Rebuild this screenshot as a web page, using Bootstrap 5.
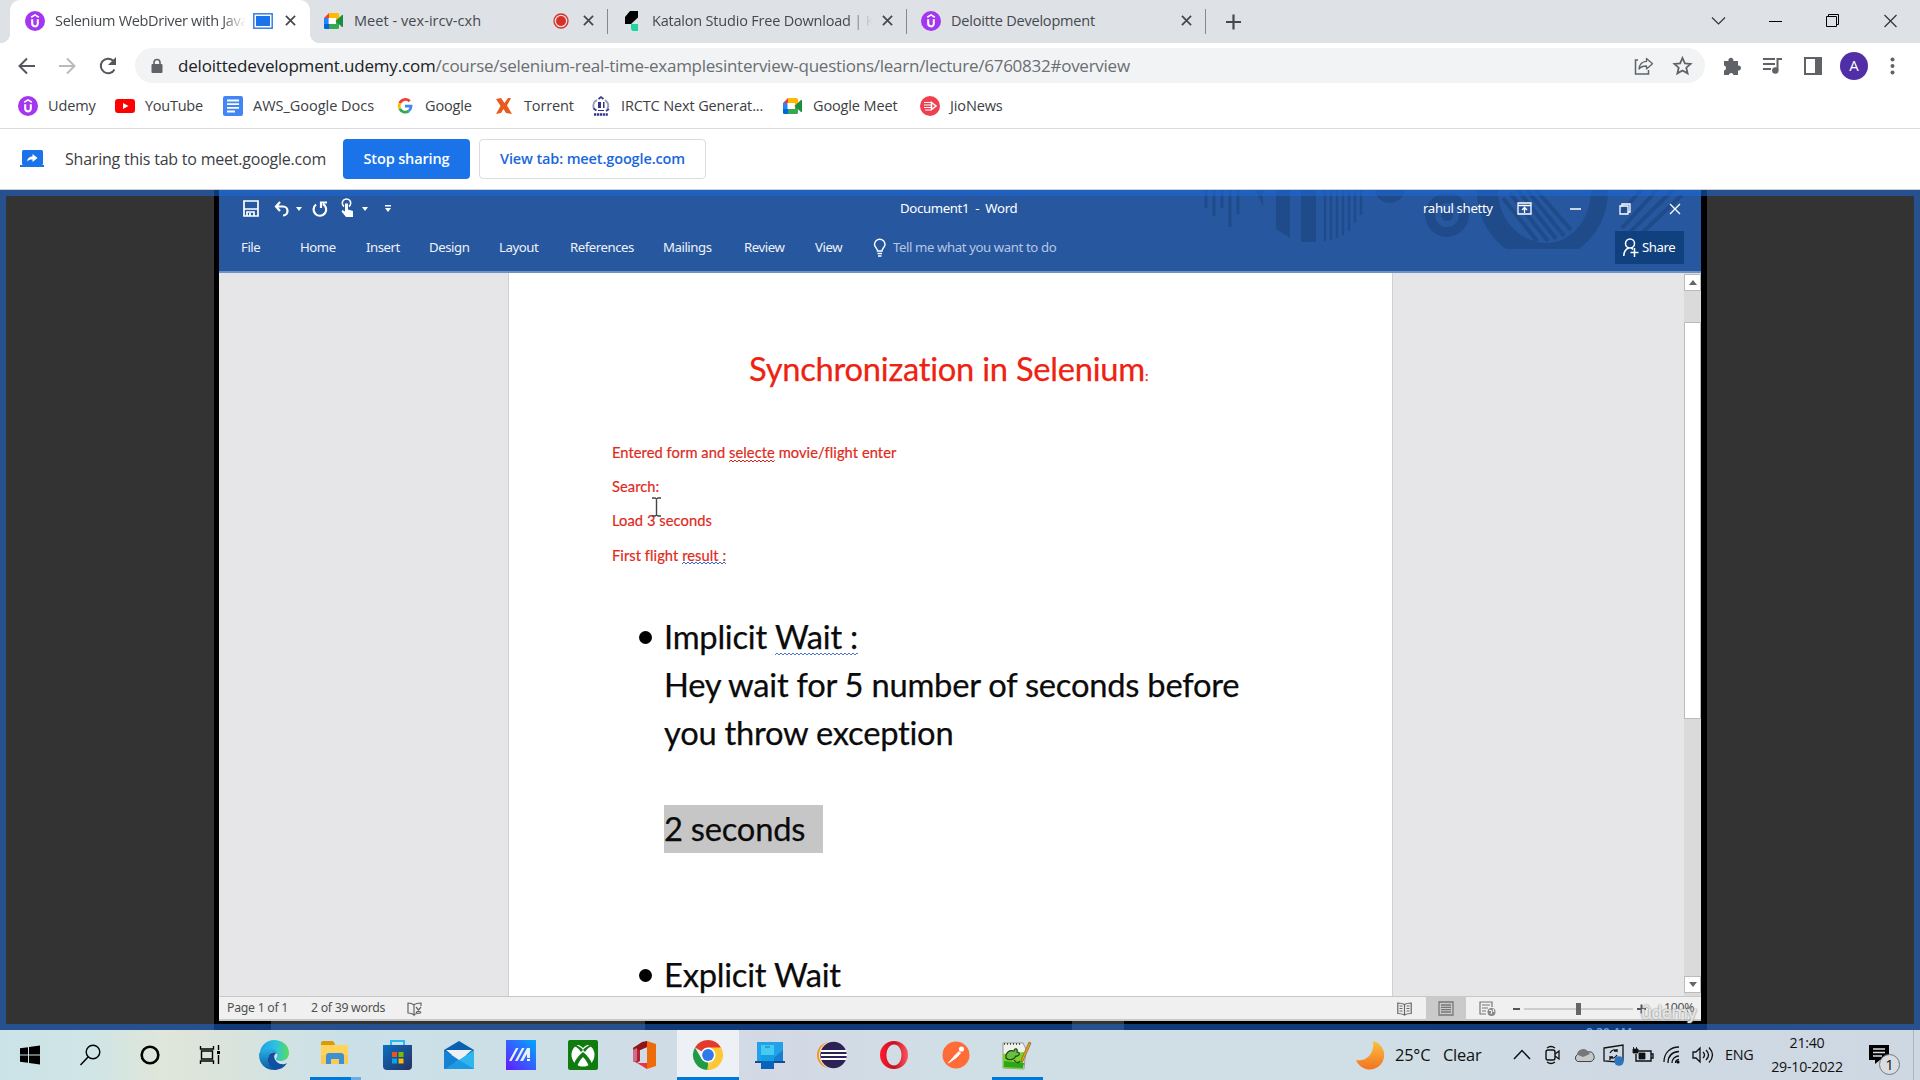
<!DOCTYPE html>
<html lang="en">
<head>
<meta charset="utf-8">
<title>Selenium WebDriver with Java</title>
<link rel="stylesheet" href="https://cdn.jsdelivr.net/npm/bootstrap@5.3.0/dist/css/bootstrap.min.css">
<script src="https://cdn.jsdelivr.net/npm/bootstrap@5.3.0/dist/js/bootstrap.bundle.min.js"></script>
<style>
body{width:1920px;height:1080px;overflow:hidden;font-family:"Open Sans","Noto Sans",sans-serif;color:#3c4043;background:#fff}
svg{display:block;flex:none;overflow:visible}
.cols{display:grid;align-items:center;white-space:nowrap}
.cols>*{min-width:0}
/* tab strip */
.tabstrip{height:43px;background:#dee1e6;font-size:14.5px;letter-spacing:-.2px;grid-template-columns:10px 300px 298px 299px 299px 505px 57px 57px 58px 44px}
.tab{height:43px;display:grid;align-items:center;position:relative;padding-bottom:2px;color:#45494d}
.tab-on{background:#fff;border-radius:10px 10px 0 0;letter-spacing:-.32px;grid-template-columns:15px 30px 198px 32px 20px}
.tab-on::before,.tab-on::after{content:"";position:absolute;bottom:0;width:10px;height:10px}
.tab-on::before{left:-10px;background:radial-gradient(circle at 0 0,transparent 10px,#fff 10.5px)}
.tab-on::after{right:-10px;background:radial-gradient(circle at 100% 0,transparent 10px,#fff 10.5px)}
.tab-off::after{content:"";position:absolute;right:0;top:9px;height:25px;width:1px;background:#85888c}
.tab-meet{letter-spacing:.05px;grid-template-columns:14px 30px 199px 30px 20px}
.tab-kat{grid-template-columns:15px 29px 230px 20px}
.tab-del{grid-template-columns:14px 30px 230px 20px}
.fade-end{overflow:hidden;-webkit-mask-image:linear-gradient(90deg,#000 calc(100% - 24px),transparent)}
/* toolbar */
.toolbar{height:45px;grid-template-columns:17px 40px 40px 38px 1570px 17px 40px 41px 37px 41px 30px}
.omnibox{height:35px;border-radius:18px;background:#f1f3f4;color:#6a6e72;font-size:17px;letter-spacing:-.26px;grid-template-columns:15px 28px 1456px 39px 30px}
.omnibox b{font-weight:400;color:#202124;letter-spacing:-.18px}
.avatar{width:28px;height:28px;background:#512da8;color:#fff;font-size:15px}
.bookmarks{height:41px;padding:0 0 5px 18px;font-size:14.5px;letter-spacing:-.13px;border-bottom:1px solid #dadce0;grid-template-columns:97px 108px 172px 99px 97px 192px 137px 120px}
.bm{display:flex;align-items:center;gap:10px}
.bm-yt{letter-spacing:-.25px}
.sharebar{height:61px;border-bottom:1px solid #cfcfcf;font-size:16px;grid-template-columns:20px 45px 278px 136px 227px}
.share-txt{letter-spacing:-.22px}
.sharebar .btn{height:40px;padding:0;font-size:14.5px;letter-spacing:-.13px;border-radius:4px;font-weight:600;line-height:36px}
.sharebar .btn-stop{width:127px;background:#1a73e8;color:#fff}
.sharebar .btn-view{width:227px;border:1px solid #dadce0;color:#1a67dc}
/* shared tab */
.stage{height:840px;background:#333;position:relative;overflow:hidden}
.share-frame{position:absolute;inset:0;border:6px solid rgba(27,105,216,.55)}
.video{width:1493px;margin-left:214px;height:840px;background:#000;padding:0 6px 0 5px}
.word{height:831px;background:#e6e6e8;font-family:"Noto Sans","Open Sans",sans-serif;position:relative}
.word-head{height:83px;background:#27589f;border-bottom:2px solid #6f92c4;position:relative;color:#fff}
.word-art{position:absolute;left:961px;top:0}
.word-title{height:36px;padding-top:1px;font-size:13.2px;letter-spacing:-.35px;position:relative;grid-template-columns:24px 31px 21px 17px 28px 21px 23px 516px 523px 94px 52px 50px 50px 25px}
.word-menu{height:43px;font-size:13.2px;letter-spacing:-.45px;position:relative;color:#eef2f8;grid-template-columns:22px 59px 66px 63px 70px 71px 93px 81px 71px 58px 20px 722px 69px}
.tell{color:#b5c7e3;letter-spacing:-.4px}
.share-box{height:33px;background:#10407d;display:flex;align-items:center;gap:4px;padding-left:8px;color:#fff}
.word-body{height:723px;display:grid;grid-template-columns:289px 885px 291px 17px}
.paper{background:#fff;border:solid #d0d0d2;border-width:0 1px;overflow:hidden;font-family:Lato,"Open Sans",sans-serif;font-variant-ligatures:none;color:#0b0b0b;padding:72px 0 0 103px;position:relative}
.doc-title{font-size:32.7px;line-height:48px;letter-spacing:-.25px;color:#ee2210;margin:0 0 42px 137px;white-space:nowrap;font-weight:400;height:48px;-webkit-text-stroke:.25px}
.doc-title span{font-size:14px}
.doc-small{font-size:14.7px;letter-spacing:.06px;line-height:34.2px;height:34.2px;color:#e02a1c;margin:0;white-space:nowrap;-webkit-text-stroke:.2px}
.doc-list{font-size:32.7px;line-height:48px;letter-spacing:-.24px;margin:41px 0 0 52px;padding:0;list-style:none;white-space:nowrap;-webkit-text-stroke:.25px}
.doc-list li{position:relative}
.doc-list li::before{content:"";position:absolute;left:-25px;top:18px;width:13px;height:13px;border-radius:50%;background:#000}
.doc-list .second{margin-top:98px}
.sq{position:relative;display:inline-block;line-height:1}
.sq svg{position:absolute;left:0;bottom:-3px;width:100%;height:4px}
.doc-list .sq svg{bottom:-3px}
.picked{display:inline-block;background:#c6c6c6;width:159px;height:48px;vertical-align:top}
.ibeam{position:absolute;left:142px;top:224px}
.scroller{background:#dadada;padding-top:1px;position:relative;display:flex;flex-direction:column}
.sbtn{height:17px;background:#fff;border:1px solid #bbb;display:flex;align-items:center;justify-content:center}
.sthumb{height:397px;margin:31px 0 257px;background:#fff;border:1px solid #bbb}
.word-foot{height:25px;background:#f0f0f0;border:solid #c8c8c8;border-width:1px 0 2px;font-size:12.3px;letter-spacing:-.28px;color:#505050;grid-template-columns:8px 84px 96px 990px 29px 53px 185px 37px}
.view-on{width:40px;height:23px;background:#cacaca;display:flex;align-items:center;justify-content:center}
.mark-u{position:absolute;right:5px;bottom:-3px;font:600 18px/24px "Open Sans",sans-serif;letter-spacing:-.9px;color:rgba(255,255,255,.8);text-shadow:0 0 2px #888,0 0 1px #999}
.under{height:9px;display:grid;grid-template-columns:52px 374px 427px 52px 577px}
.under i:nth-child(even){background:#343434}
.under i:last-child{position:relative}
.under em{position:absolute;left:462px;top:5px;font:600 12px/14px "Noto Sans",sans-serif;color:#cfd8ee}
/* taskbar */
.taskbar{height:50px;color:#111;background:linear-gradient(90deg,#cbe2e7 0,#cfe5e6 90px,#dfe6da 160px,#dbe4dc 220px,#cae0e8 340px,#cddfe6 560px,#d3d9e5 780px,#d0dfe5 960px,#d0dfe5 1340px,#cfd9e4 1600px,#ced8e2 1920px);position:relative;grid-template-columns:19px 60px 61px 50px 53px 61px 62px 62px 62px 62px 62px 63px 62px 62px 62px 62px 61px 62px 307px 40px 48px 70px 31px 29px 30px 29px 31px 29px 33px 44px 100px 45px;justify-content:start}
.tb{height:50px;width:62px;display:flex;align-items:center;justify-content:center;position:relative}
.tb-on{background:#edf1f6}
.tb-run::after{content:"";position:absolute;bottom:0;left:6px;width:51px;height:3px;background:linear-gradient(90deg,#0078d7 41px,#6aaee8 41px)}
.tb-on.tb-run::after{left:0;width:62px;background:#0078d7}
.tb-np.tb-run::after{background:#0078d7}
.tray{font-size:16.4px;letter-spacing:-.2px}
.lang{font-size:14.4px;letter-spacing:-.3px}
.clock{font-size:14.2px;letter-spacing:-.25px;line-height:24px;width:76px;text-align:center}
.noti{position:relative;border-right:1px solid #aab4bd;height:50px;padding-top:15px}
.noti span{position:absolute;left:10px;top:24px;width:21px;height:21px;border-radius:50%;background:#d9dde1;border:1px solid #777;font:15px/18px "Open Sans",sans-serif;text-align:center}
</style>
</head>
<body>
<svg width="0" height="0" class="position-absolute">
 <symbol id="x" viewBox="0 0 12 12"><path d="M1 1l10 10M11 1L1 11" stroke="#45494d" stroke-width="1.9" fill="none"/></symbol>
 <symbol id="udemy" viewBox="0 0 20 20"><circle cx="10" cy="10" r="10" fill="#a435f0"/><path d="M6.2 6.300L10 3.900l3.800 2.400" stroke="#fff" stroke-width="1.700" fill="none"/><path d="M7.200 8.300v4.300c0 3.700 5.600 3.700 5.600 0V8.300" stroke="#fff" stroke-width="2.100" fill="none"/></symbol>
 <symbol id="meet" viewBox="0 0 20 16"><path d="M5 0v5H0z" fill="#ea4335"/><path d="M0 5h4.500v6H0z" fill="#2684fc"/><path d="M0 11h5v5H1.300Q0 16 0 14.700z" fill="#0066da"/><path d="M5 5h7v6H5z" fill="#fff"/><path d="M5 0h8.500Q15 0 15 1.500V6l-3 2V5H5z" fill="#ffba00"/><path d="M5 11h7V8l3 1v5.500Q15 16 13.500 16H5z" fill="#34a853"/><path d="M11.500 8l6.500-6q1-.5 1 .6v10.800q0 1-1 .5z" fill="#1e8e3e"/></symbol>
 <symbol id="wave" viewBox="0 0 90 4" preserveAspectRatio="xMinYMid slice"><path d="M0 3l2-2 2 2 2-2 2 2 2-2 2 2 2-2 2 2 2-2 2 2 2-2 2 2 2-2 2 2 2-2 2 2 2-2 2 2 2-2 2 2 2-2 2 2 2-2 2 2 2-2 2 2 2-2 2 2 2-2 2 2 2-2 2 2 2-2 2 2 2-2 2 2 2-2 2 2 2-2 2 2 2-2 2 2 2-2 2 2 2-2 2 2" fill="none" stroke="currentColor"/></symbol>
</svg>

<header class="tabstrip cols">
 <span></span>
 <div class="tab tab-on"><span></span><svg width="20" height="20"><use href="#udemy"/></svg><span class="fade-end" style="width:191px">Selenium WebDriver with Java</span><svg width="20" height="16"><rect x=".8" y=".8" width="18.400" height="14.400" fill="#fff" stroke="#3580e8" stroke-width="1.500"/><rect x="3" y="3" width="14" height="10" fill="#1a73e8"/></svg><svg width="11" height="11"><use href="#x"/></svg></div>
 <div class="tab tab-off tab-meet"><span></span><svg width="20" height="16"><use href="#meet"/></svg><span>Meet - vex-ircv-cxh</span><svg width="16" height="16"><circle cx="8" cy="8" r="7" fill="none" stroke="#d93025" stroke-width="1.300"/><circle cx="8" cy="8" r="5" fill="#d93025"/></svg><svg width="11" height="11"><use href="#x"/></svg></div>
 <div class="tab tab-off tab-kat"><span></span><svg width="20" height="20"><path d="M7 0h8v6.500L8 13H2V6z" fill="#000"/><path d="M8 13h7v7H9.500L8 18z" fill="#1fd6a0"/></svg><span class="fade-end" style="width:220px">Katalon Studio Free Download | Katalon</span><svg width="11" height="11"><use href="#x"/></svg></div>
 <div class="tab tab-off tab-del"><span></span><svg width="20" height="20"><use href="#udemy"/></svg><span>Deloitte Development</span><svg width="11" height="11"><use href="#x"/></svg></div>
 <svg width="60" height="16"><path d="M27.500 .5v15M20 8h15" stroke="#45494d" stroke-width="2.200"/></svg>
 <svg width="14" height="14" class="mb-1"><path d="M1 4.500L7.500 11 14 4.500" fill="none" stroke="#333" stroke-width="1.200"/></svg>
 <svg width="14" height="14" class="mb-2"><path d="M1 10.500h13" stroke="#000"/></svg>
 <svg width="14" height="14" class="mb-2"><path d="M1.500 5.500h10v10h-10zM3.500 5V3.500h10v10H12" fill="none" stroke="#000"/></svg>
 <svg width="14" height="14" class="mb-2"><path d="M1.500 4l12 12m0-12l-12 12" fill="none" stroke="#333" stroke-width="1.200"/></svg>
</header>

<nav class="toolbar cols">
 <span></span>
 <svg width="20" height="20"><path d="M18 10H3M10 2.500L2.500 10l7.500 7.500" fill="none" stroke="#54585d" stroke-width="2"/></svg>
 <svg width="20" height="20"><path d="M2 10h15M10 2.500l7.500 7.500-7.500 7.500" fill="none" stroke="#b8babd" stroke-width="2"/></svg>
 <svg width="22" height="20"><path d="M17.500 13.500A7.300 7.300 0 1 1 16 4.500l2 2" fill="none" stroke="#54585d" stroke-width="2"/><path d="M19 1v8h-8z" fill="#54585d"/></svg>
 <div class="omnibox cols"><span></span>
  <svg width="14" height="16"><rect x="1.500" y="6" width="11" height="9" rx="1" fill="#5f6368"/><path d="M4 7V4.500a3 3 0 0 1 6 0V7" fill="none" stroke="#5f6368" stroke-width="1.600"/></svg>
  <span><b>deloittedevelopment.udemy.com</b>/course/selenium-real-time-examplesinterview-questions/learn/lecture/6760832#overview</span>
  <svg width="20" height="20"><path d="M4 4H1.500v14h13v-4" fill="none" stroke="#5f6368" stroke-width="1.500"/><path d="M12.500 2.500l6 5.200-6 5.200V10c-4 0-6 1-7.500 3 .5-5 3-7.300 7.500-7.600z" fill="none" stroke="#5f6368" stroke-width="1.300" stroke-linejoin="round"/></svg>
  <svg width="20" height="20"><path d="M9.500 2l2.400 5.300 5.700.600-4.300 3.800 1.300 5.700L9.500 14.500l-5.100 2.900 1.300-5.700L1.400 7.900l5.700-.6z" fill="none" stroke="#5f6368" stroke-width="1.800"/></svg>
 </div>
 <span></span>
 <svg width="20" height="20"><path d="M2 5h4.500a2.500 2.500 0 1 1 4.800 0H16v4.600a2.500 2.500 0 1 1 0 4.900V19h-4.500a2.400 2.400 0 0 0-4.700 0H2v-4.500a2.500 2.500 0 0 0 0-4.900z" fill="#5f6368"/></svg>
 <svg width="20" height="20"><path d="M1 3h12M1 8h12M1 13h8" stroke="#5f6368" stroke-width="2"/><path d="M15.500 14V3H20" fill="none" stroke="#5f6368" stroke-width="2"/><circle cx="13.300" cy="14.500" r="3.200" fill="#5f6368"/></svg>
 <svg width="20" height="20"><path d="M2 2h16v16H2z" fill="none" stroke="#5f6368" stroke-width="2"/><path d="M12 2h6v16h-6z" fill="#5f6368"/></svg>
 <div class="avatar rounded-circle d-flex align-items-center justify-content-center">A</div>
 <svg width="22" height="20"><g fill="#5f6368"><circle cx="11.500" cy="3.500" r="2"/><circle cx="11.500" cy="10" r="2"/><circle cx="11.500" cy="16.500" r="2"/></g></svg>
</nav>

<nav class="bookmarks cols">
 <div class="bm"><svg width="20" height="20"><use href="#udemy"/></svg>Udemy</div>
 <div class="bm bm-yt"><svg width="20" height="14"><rect width="20" height="14" rx="3" fill="#f00"/><path d="M8 4l5.500 3L8 10z" fill="#fff"/></svg>YouTube</div>
 <div class="bm"><svg width="20" height="20"><rect width="20" height="20" rx="2" fill="#4285f4"/><path d="M4 4.500h12M4 8.200h12M4 11.800h12M4 15.500h8" stroke="#fff" stroke-width="1.800"/></svg><span style="letter-spacing:-.02px">AWS_Google Docs</span></div>
 <div class="bm"><svg width="20" height="20"><g fill="none" stroke-width="2.800"><path d="M14.700 5.300A6 6 0 0 0 4.800 7.200" stroke="#ea4335"/><path d="M4.800 7.200a6.200 6.200 0 0 0 0 5.600" stroke="#fbbc05"/><path d="M4.800 12.800a6 6 0 0 0 9.200 2" stroke="#34a853"/><path d="M14 14.800A6 6 0 0 0 16 10.200H10" stroke="#4285f4"/></g></svg>Google</div>
 <div class="bm"><svg width="20" height="16"><path d="M2 1l5-1 3.500 5L14 0h3l-4 7.500L18 16l-6-1-2.500-4L7 15l-5 1 4.500-8z" fill="#ea5a1c"/></svg>Torrent</div>
 <div class="bm"><svg width="20" height="20"><path d="M3 13C1 8 4 5 6 4M14 4c4 3 4 7 2 9" fill="none" stroke="#9a9cba" stroke-width="2"/><path d="M7.500 3L10 1l2.500 2M2.500 12.500l3 2M15 15l3-2" stroke="#3b3987" stroke-width="1.700" fill="none"/><path d="M7 6h3v6H7zM12 6h1.500v6H12zM7 14h6v1H7z" fill="#33338b"/><path d="M3 18.500h14" stroke="#33338b" stroke-width="2.500" stroke-dasharray="2.200 .7"/></svg>IRCTC Next Generat...</div>
 <div class="bm"><svg width="20" height="16"><use href="#meet"/></svg>Google Meet</div>
 <div class="bm"><svg width="20" height="20"><circle cx="10" cy="10" r="10" fill="#ef4050"/><path d="M4 6.500h7M4 9h7M4 11.500h7M5 14h6" stroke="#fff" stroke-width="1.200"/><path d="M11.500 6.500v7l4.500-3.500z" fill="none" stroke="#fff" stroke-width="1.500"/></svg>JioNews</div>
</nav>

<section class="sharebar cols">
 <span></span>
 <svg width="24" height="18"><rect x="2" y="0" width="21" height="15" rx="1.500" fill="#1a73e8"/><path d="M0 15h24v2H0z" fill="#1a73e8"/><path d="M7 11.500c.5-3.500 2.500-5 5.500-5V4l5 4-5 4V9.500c-2.500 0-4 .5-5.500 2z" fill="#fff"/></svg>
 <span class="share-txt">Sharing this tab to meet.google.com</span>
 <button class="btn btn-stop">Stop sharing</button>
 <button class="btn btn-view">View tab: meet.google.com</button>
</section>

<main class="stage">
 <div class="video">
  <div class="word">
   <div class="word-head">
    <svg class="word-art" width="520" height="80" fill="none" stroke="#1f4b8b"><path d="M26 0v18M34 0v26M42 0v18M50 0v37M58 0v24" stroke-width="3"/><path d="M75 0h8v16z" fill="#1f4b8b" stroke="none"/><path d="M96 0h14v48l-14-9z M121 0h15v52h-15z" fill="#1f4b8b" stroke="none"/><path d="M145 0v51M151 0v50M157 0v48M163 0v45M169 0v41M175 0v33M181 0v25" stroke-width="2.500"/><path d="M195 0c2 17 27 17 30 0z" fill="#1f4b8b" stroke="none"/><circle cx="267" cy="25" r="17" stroke-width="10"/><circle cx="267" cy="25" r="6" fill="#1f4b8b" stroke="none"/><path d="M297 0c0 25 10 44 29 59h73c19-15 29-34 29-59h-17c0 30-20 53-45 53s-48-23-48-53z" fill="#1f4b8b" stroke="none"/><path d="M323 8l34 43M330 3l38 48M338 0l38 49M347 0l37 46M356 0l35 40" stroke-width="4"/><path d="M440 24l21-24M442 38l35-38M450 42l43-42M462 43l40-38" stroke-width="4"/></svg>
    <div class="word-title cols"><span></span>
     <svg width="16" height="17"><path d="M1 1h14v15H1zM1 9h14M4 16v-4h7v4M7 13v3" fill="none" stroke="#fff" stroke-width="1.700"/></svg>
     <svg width="16" height="16"><path d="M6 1L2 5.500 6 10M2 5.500h7c6 0 6 9 0 9" fill="none" stroke="#fff" stroke-width="2.200"/></svg>
     <svg width="8" height="5"><path d="M1 1h6L4 5z" fill="#fff"/></svg>
     <svg width="16" height="16"><path d="M4 3.500A6.300 6.300 0 1 0 11 3M9 7V1.500h6" fill="none" stroke="#fff" stroke-width="2.200"/></svg>
     <svg width="14" height="19"><path d="M4 7.500a4.200 4.200 0 1 1 5 0" fill="none" stroke="#fff" stroke-width="1.600"/><path d="M5 4.500h3v6l5 1.500v6H6L1.500 12.500l1-1.500 2.500 1.500z" fill="#fff"/></svg>
     <svg width="8" height="5"><path d="M1 1h6L4 5z" fill="#fff"/></svg>
     <svg width="8" height="8"><path d="M1 0h6v1.500H1zM1 3h6L4 7z" fill="#fff"/></svg>
     <span>Document1&nbsp; -&nbsp; Word</span>
     <span>rahul shetty</span>
     <svg width="16" height="13"><path d="M1 1h13v11H1zM1 3.500h13M7.500 11V5.500M5 8l2.500-2.500L10 8" fill="none" stroke="#fff" stroke-width="1.300"/></svg>
     <svg width="12" height="4"><path d="M1 2h11" stroke="#fff" stroke-width="1.500"/></svg>
     <svg width="12" height="12"><path d="M1 3h8v8H1zM3 3V1h8v8H9" fill="none" stroke="#fff" stroke-width="1.300"/></svg>
     <svg width="12" height="12"><path d="M1 1l10 10M11 1L1 11" stroke="#fff" stroke-width="1.300"/></svg>
    </div>
    <div class="word-menu cols"><span></span><span>File</span><span>Home</span><span>Insert</span><span>Design</span><span>Layout</span><span>References</span><span>Mailings</span><span>Review</span><span>View</span>
     <svg width="14" height="18"><path d="M4.500 12c0-3-3-3.500-3-6.500a5 5 0 0 1 10.500 0c0 3-3 3.500-3 6.500zM4.500 14.500H9M5 17h3.500" fill="none" stroke="#fff" stroke-width="1.400"/></svg>
     <span class="tell">Tell me what you want to do</span>
     <div class="share-box"><svg width="15" height="19"><circle cx="7" cy="5.500" r="4.500" fill="none" stroke="#fff" stroke-width="1.500"/><path d="M.8 18c0-4 2.200-7 5-8M8 9.500l2 2M11.500 10v9M7.500 14.500h8" fill="none" stroke="#fff" stroke-width="1.500"/></svg>Share</div>
    </div>
   </div>
   <div class="word-body">
    <div></div>
    <article class="paper">
     <h1 class="doc-title">Synchronization in Selenium<span>:</span></h1>
     <p class="doc-small">Entered form and <span class="sq">selecte<svg style="color:#d22"><use href="#wave"/></svg></span> movie/flight enter</p>
     <p class="doc-small">Search:</p>
     <p class="doc-small">Load 3 seconds</p>
     <p class="doc-small">First flight <span class="sq">result :<svg style="color:#36c"><use href="#wave"/></svg></span></p>
     <ul class="doc-list">
      <li>Implicit <span class="sq">Wait :<svg style="color:#4a78d0"><use href="#wave"/></svg></span><br>Hey wait for 5 number of seconds before<br>you throw exception<br><br><span class="picked">2 seconds</span></li>
      <li class="second">Explicit Wait</li>
     </ul>
     <svg class="ibeam" width="10" height="20"><path d="M1 1h3l1.500 1L7 1h3M1 19h3l1.500-1L7 19h3M5.500 2v16" fill="none" stroke="#444" stroke-width="1.400"/></svg>
    </article>
    <div></div>
    <div class="scroller">
     <div class="sbtn"><svg width="8" height="5"><path d="M0 5h8L4 0z" fill="#666"/></svg></div>
     <div class="sthumb"></div>
     <div class="sbtn"><svg width="8" height="5"><path d="M0 0h8L4 5z" fill="#666"/></svg></div>
    </div>
   </div>
   <div class="word-foot cols"><span></span><span>Page 1 of 1</span><span>2 of 39 words</span>
    <svg width="16" height="14"><path d="M7 13V3Q5 1 1 1v10q4 0 6 2zM7 3q2-2 7-2v3M7 13q2-2 7-2M9 5l5 6M14 5l-5 6" fill="none" stroke="#666" stroke-width="1.200"/></svg>
    <svg width="16" height="14"><path d="M7.500 13V2.500Q5 1 .8 1v10.500q4 0 6.700 1.500 2-1.500 6.700-1.500V1q-4.500 0-6.700 1.500M2.500 4h3M2.500 6.500h3M2.500 9h3M9.500 4h3M9.500 6.500h3M9.500 9h3" fill="none" stroke="#666" stroke-width="1.200"/></svg>
    <div class="view-on"><svg width="16" height="15"><path d="M1 1h14v13H1zM3 4h10M3 6.300h10M3 8.700h10M3 11h10" fill="none" stroke="#777" stroke-width="1.300"/></svg></div>
    <svg width="170" height="16"><path d="M13 6V1H1v12h6M3 4h8M3 7h6M3 10h4" fill="none" stroke="#777" stroke-width="1.200"/><circle cx="12.500" cy="11" r="4" fill="#888"/><path d="M10 9l3 1-1 3M14 8l1 3" stroke="#fff" fill="none"/><path d="M34 8h7M158 8h9M162.500 3.500v9" stroke="#555" stroke-width="2"/><path d="M45 8h109" stroke="#aaa"/><path d="M97 2h5v12h-5z" fill="#666"/></svg>
    <span>100%</span>
   </div>
   <div class="mark-u">ûdemy</div>
  </div>
  <div class="under"><i></i><i></i><i></i><i></i><i><em>8:30 AM</em></i></div>
 </div>
 <div class="share-frame"></div>
</main>

<footer class="taskbar cols"><span></span>
 <svg width="22" height="20"><path d="M1 3.300l8-1.100v7.300H1zM10 2l11-1.600v9.100H10zM1 10.500h8v7.300l-8-1.100zM10 10.500h11v9.100L10 18z" fill="#000"/></svg>
 <svg width="22" height="22"><circle cx="14" cy="8" r="6.800" fill="none" stroke="#000" stroke-width="1.400"/><path d="M9.300 12.700L1.500 21" stroke="#000" stroke-width="1.500"/></svg>
 <svg width="20" height="20"><circle cx="10" cy="10" r="8.300" fill="none" stroke="#000" stroke-width="2.600"/></svg>
 <svg width="24" height="20" class="ms-2"><path d="M2.500 1v3h13V1M2.500 19v-3h13v3M3.500 6h11v8h-11zM20.500 0v5M20.500 10v9" fill="none" stroke="#000" stroke-width="1.400"/><path d="M19 6h3v3h-3z"/></svg>
 <div class="tb"><svg width="30" height="30" viewBox="0 0 30 30"><defs><linearGradient id="eg"><stop stop-color="#1ca0e8"/><stop offset=".55" stop-color="#2cc3df"/><stop offset="1" stop-color="#58dc58"/></linearGradient><linearGradient id="eb" x2="0" y2="1"><stop stop-color="#28b3e8"/><stop offset="1" stop-color="#0c59a4"/></linearGradient></defs><path d="M1 12C2 5 8 0 15 0c8 0 15 5 15 13 0 5-4 8-8 8-3 0-5-1-5-2 0-1 2-2 1-5-1-5-12-6-17-2z" fill="url(#eg)"/><path d="M0 15c0-4 5-7 9-7 5 0 8 2 9 5-5-3-9 1-9 7 0 4 2 7 6 10C7 30 0 24 0 15z" fill="url(#eb)"/><path d="M9 18c1-5 4-7 9-5-3 1-4 4-1 8s8 4 11 2c-3 5-8 7-13 7-4-2-7-7-6-12z" fill="#1050a0"/></svg></div>
 <div class="tb tb-run"><svg width="28" height="24" class="mb-1"><path d="M0 2q0-2 2-2h10l2 3v4H0z" fill="#dc9a08"/><path d="M0 4h27v19H0z" fill="#ffd35c"/><path d="M0 14h27v9H0z" fill="#f6c24a" opacity=".5"/><path d="M5 23v-8q0-3 3-3h12q3 0 3 3v8h-5v-5H10v5z" fill="#3d90d5"/></svg></div>
 <div class="tb"><svg width="29" height="30"><defs><linearGradient id="st" x2="1" y2="1"><stop stop-color="#0a6fc2"/><stop offset="1" stop-color="#292f60"/></linearGradient></defs><path d="M8 6V1h13v5" fill="none" stroke="#28b9f0" stroke-width="2"/><path d="M0 5h29v21q0 4-4 4H4q-4 0-4-4z" fill="url(#st)"/><path d="M9 12h5v5H9z" fill="#f25022"/><path d="M15.500 12h5v5h-5z" fill="#7fba00"/><path d="M9 18.500h5v5H9z" fill="#00a4ef"/><path d="M15.500 18.500h5v5h-5z" fill="#ffb900"/></svg></div>
 <div class="tb"><svg width="30" height="28"><path d="M0 9L15 0l15 9v5H0z" fill="#0b5fae"/><path d="M2 9h26L15 20z" fill="#eef2f5"/><path d="M0 9l15 10-12 9H0z" fill="#1583d4"/><path d="M30 9v19H2l13-9z" fill="#30b6ef"/><path d="M15 19l15 9H2z" fill="#1d9ae2"/></svg></div>
 <div class="tb"><svg width="30" height="30"><defs><linearGradient id="ar" y1="1" x2="1" y2="0"><stop stop-color="#6519ff"/><stop offset="1" stop-color="#00aaff"/></linearGradient></defs><path d="M0 0h30v30H0z" fill="url(#ar)"/><path d="M3 21h2.500l7-13H10zM9 21h2.500l7-13H16z" fill="#e7f2ff"/><path d="M14 21h3l4-7v4h3V8h-3z" fill="#e7f2ff"/><path d="M21 19h3v2h-3z" fill="#fff"/></svg></div>
 <div class="tb"><svg width="30" height="30"><rect width="30" height="30" rx="2" fill="#107c10"/><circle cx="15" cy="15" r="11.500" fill="#fff"/><path d="M6 25c0-4 5-10 9-13 4 3 9 9 9 13l-3 2c-1-4-3-7-6-10-3 3-5 6-6 10zM7 5c3-1 6 1 8 3 2-2 5-4 8-3-3-4-13-4-16 0zM7 5c2 0 6 2 8 5l-2 2C11 9 9 7 6 6zM23 5c-2 0-6 2-8 5l2 2c2-3 4-5 7-6z" fill="#107c10"/></svg></div>
 <div class="tb"><svg width="24" height="28"><path d="M0 7L14 0v6L7 9v11l-3 2-4-2z" fill="#b3202f"/><path d="M14 0l9 3v22l-9 3z" fill="#ee6b0c"/><path d="M0 7L9 1l5-1v6L7 9z" fill="#8e1618"/><path d="M4 22h10v6z" fill="#e9344b"/><path d="M0 9l4-2v13l-4 1z" fill="#cf6a8c"/></svg></div>
 <div class="tb tb-on tb-run"><svg width="30" height="30" viewBox="0 0 30 30"><path d="M15 15L2 7.500A15 15 0 0 1 28 7.500z" fill="#e23b2e"/><path d="M15 7.500h13A15 15 0 0 1 15 30l6.500-11.200z" fill="#fcc934"/><path d="M2 7.500l6.500 11.300L15 22.500 15.500 30A15 15 0 0 1 2 7.500z" fill="#219a46"/><path d="M21.500 18.700L15 30a15 15 0 0 1-1-.1L16 21z" fill="#fcc934"/><circle cx="15" cy="15" r="7.500" fill="#fff"/><circle cx="15" cy="15" r="5.900" fill="#3079ea"/></svg></div>
 <div class="tb"><svg width="30" height="27"><path d="M2 0h26v20H2z" fill="#167fd0"/><path d="M2 0h26v8L14 20H2z" fill="#22a0e8"/><path d="M0 19h30v2H0z" fill="#0c4f93"/><path d="M6 3h13v24H6z" fill="#0a62ba"/><path d="M6 3h13v10H6z" fill="#45cbf3"/><path d="M6 13h13v6H6z" fill="#159fe3"/><path d="M10 5h5" stroke="#0a78bc"/></svg></div>
 <div class="tb"><svg width="30" height="28"><circle cx="13" cy="14" r="13" fill="#f7941e"/><circle cx="15.500" cy="14" r="13.500" fill="#f4e6dc"/><circle cx="16.500" cy="14" r="13.200" fill="#2c2255"/><path d="M4 10h25.500M4 14h26M4 18h25.500" stroke="#fff" stroke-width="1.900"/></svg></div>
 <div class="tb"><svg width="30" height="30"><defs><linearGradient id="op"><stop stop-color="#ff1b2d"/><stop offset=".5" stop-color="#c4101e"/><stop offset="1" stop-color="#ff5560"/></linearGradient></defs><path fill-rule="evenodd" d="M15 1a14 14 0 1 1 0 28 14 14 0 1 1 0-28zm0 3.500C5 5 5 25 15 25.500 25 25 25 5 15 4.500z" fill="url(#op)"/></svg></div>
 <div class="tb"><svg width="28" height="28"><circle cx="14" cy="14" r="13.500" fill="#ff6c37"/><circle cx="19.500" cy="8" r="2.600" fill="#fff"/><path d="M17 10.500l1.500 1.500-4 4.500-8 5.500 6-7z" fill="#fff" stroke="#fff" stroke-linejoin="round"/></svg></div>
 <div class="tb tb-run tb-np"><svg width="30" height="29"><path d="M1 2h20l3 6-2 20-21-1z" fill="#eef3ea" stroke="#999"/><path d="M1 13l21-2-1 17-20-1z" fill="#76d723"/><path d="M2 20l20 2-1 5-19-1z" fill="#2fa51b"/><path d="M4 14c2-5 5-5 8-4 1-4 4-2 3 1 4 0 2 5-1 4-2 4-7 5-10 2zM12 19c3 4 5 3 6 1" fill="#66c142" stroke="#253d1a" stroke-width="1.200"/><path d="M2 3h17" stroke="#555" stroke-dasharray="1 2" stroke-width="2"/><path d="M27 1l2 1-8 18-2 1 .5-3z" fill="#e4a12a" stroke="#8a5a20" stroke-width=".7"/></svg></div>
 <span></span>
 <svg width="30" height="30"><defs><linearGradient id="mo" x2="0" y2="1"><stop stop-color="#fcc13e"/><stop offset="1" stop-color="#f27321"/></linearGradient></defs><path d="M18 1a14.500 14.500 0 1 1-17 19c10 2 19-6 17-19z" fill="url(#mo)"/></svg>
 <span class="tray">25°C</span><span class="tray">Clear</span>
 <svg width="18" height="12"><path d="M1 10l8-8.500 8 8.500" fill="none" stroke="#111" stroke-width="1.500"/></svg>
 <svg width="20" height="20"><rect x="2" y="5" width="9" height="10" rx="2" fill="none" stroke="#111" stroke-width="1.400"/><path d="M11 9l4-3v8l-4-3M3 3q4-3 8 0M3 17q4 3 8 0" fill="none" stroke="#111" stroke-width="1.300"/></svg>
 <svg width="22" height="16"><path d="M4.500 14.500a4 4 0 0 1 0-7A6 6 0 0 1 15 5a5 5 0 0 1 3 9.500z" fill="#c6c8c9" stroke="#444"/><path d="M4 7.500A6 6 0 0 1 15 5l2 2-7 3z" fill="#777"/></svg>
 <svg width="22" height="22"><path d="M1 4l19-3v15l-5 2-14-1z" fill="none" stroke="#111" stroke-width="1.300"/><path d="M7 9q3-5 7-2v-2M14 7h-3M14 11q-3 5-7 2v3M7 13h3" fill="none" stroke="#111" stroke-width="1.300"/><circle cx="16" cy="17" r="4.800" fill="#2e74bd"/></svg>
 <svg width="22" height="18"><path d="M5 5h14v10H4V8M19 8h2v4h-2" fill="none" stroke="#111" stroke-width="1.400"/><path d="M7 7h6v6H7zM1 3h5v4H1zM1.500 1v2M4.500 1v2" fill="#111" stroke="#111" stroke-width=".8"/></svg>
 <svg width="18" height="18"><path d="M1 16C1 7 7 1 16 1M5 17c0-7 4-11 11-11.500M9 17c0-4 3-7 7-7M12.500 17q0-3 3.500-3.500" fill="none" stroke="#111" stroke-width="1.300"/><circle cx="15" cy="16" r="1.600"/></svg>
 <svg width="22" height="18"><path d="M1 6h3l4-4v14l-4-4H1zM11 6q3 3 0 6M14 4q5 5 0 10M17 1.500q7 7.500 0 15" fill="none" stroke="#111" stroke-width="1.300"/></svg>
 <span class="lang">ENG</span>
 <div class="clock">21:40<br>29-10-2022</div>
 <div class="noti"><svg width="21" height="20"><path d="M0 0h20v15h-9l-5 4v-4H0z" fill="#000"/><path d="M4 4h12M4 7.500h12M4 11h9" stroke="#d5dde5" stroke-width="1.300"/></svg><span>1</span></div>
</footer>
</body>
</html>
